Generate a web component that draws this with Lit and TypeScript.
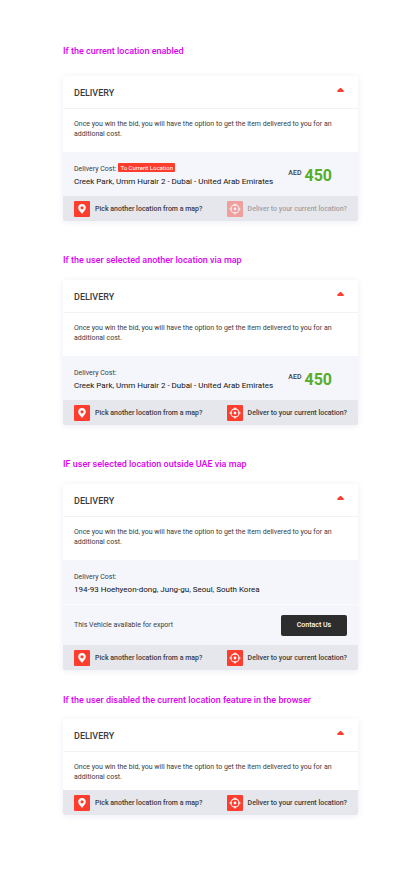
import { LitElement, html, css, svg, nothing } from "lit";
import { customElement, property, state } from "lit/decorators.js";
import { classMap } from "lit/directives/class-map.js";

const pinIcon = svg`
  <path fill="#fff" fill-rule="evenodd" d="M8 3C5.7 3 4.2 4.6 4.2 6.7c0 2.5 2.6 4.4 3.8 6.3 1.2-1.9 3.8-3.8 3.8-6.3C11.8 4.6 10.3 3 8 3ZM8 5.2a1.6 1.6 0 1 1 0 3.2 1.6 1.6 0 0 1 0-3.2Z"/>`;

const targetIcon = svg`
  <circle cx="8" cy="8" r="4.1" fill="none" stroke="#fff" stroke-width="1.1"/>
  <circle cx="8" cy="8" r="1.4" fill="#fff"/>
  <path d="M8 2.4v2.6M8 11v2.6M2.4 8H5M11 8h2.6" stroke="#fff" stroke-width="1.2"/>`;

@customElement("delivery-card")
export class DeliveryCard extends LitElement {
  @property() address = "";
  @property() price = "";
  @property({ type: Boolean }) current = false;
  @property({ type: Boolean }) exportable = false;
  @state() private open = true;

  static styles = css`
    :host {
      display: block;
      border-radius: 2px;
      background: #fff;
      box-shadow: 0 1px 6px rgba(60, 70, 160, 0.09);
      overflow: hidden;
      color: #3a3a3c;
      font-size: 7px;
      line-height: 10px;
    }
    button {
      border: 0;
      padding: 0;
      background: none;
      color: inherit;
      font: inherit;
      text-align: left;
      cursor: pointer;
    }
    button:disabled {
      cursor: default;
    }
    .head {
      display: flex;
      align-items: flex-start;
      justify-content: space-between;
      width: 100%;
      height: 33px;
      padding: 12px 14px 0 11px;
      border-bottom: 1px solid #f3f3f7;
      font-size: 9px;
      font-weight: 500;
    }
    .caret {
      width: 7px;
      height: 4px;
    }
    .closed .caret {
      transform: rotate(180deg);
    }
    p {
      margin: 0;
    }
    .intro {
      padding: 10px 24px 8px 11px;
    }
    .roomy {
      padding-bottom: 13px;
    }
    .cost {
      display: flex;
      align-items: flex-start;
      justify-content: space-between;
      height: 44px;
      padding: 11px 26px 0 11px;
      box-sizing: border-box;
      background: #f5f6fb;
    }
    .label {
      display: flex;
      align-items: center;
      gap: 2px;
      height: 12px;
    }
    .tag {
      align-self: flex-start;
      padding: 0 2px;
      border-radius: 1px;
      background: #ff3d2e;
      color: #fff;
      font-size: 6px;
      line-height: 9px;
    }
    .address {
      margin-top: 2px;
      color: #111;
      font-size: 8px;
      white-space: nowrap;
    }
    .price {
      display: flex;
      align-items: flex-start;
      gap: 3px;
      padding-top: 5px;
      font-weight: 500;
    }
    .amount {
      color: #56ad2a;
      font-size: 16px;
      font-weight: 700;
      line-height: 16px;
    }
    .export {
      display: flex;
      align-items: center;
      justify-content: space-between;
      height: 41px;
      padding: 0 11px;
      border-top: 1px solid #fbfbfd;
      box-sizing: border-box;
      background: #f5f6fb;
    }
    .contact {
      width: 66px;
      height: 21px;
      border-radius: 2px;
      background: #2d2d2d;
      color: #fff;
      font-weight: 500;
      text-align: center;
    }
    .actions {
      display: grid;
      grid-template-columns: 153fr 120fr;
      align-items: center;
      height: 25px;
      padding: 0 11px;
      background: #e6e7ed;
    }
    .action {
      display: flex;
      align-items: center;
      gap: 5px;
      font-weight: 500;
      white-space: nowrap;
    }
    .action svg {
      width: 16px;
      height: 16px;
      border-radius: 1px;
      background: #ff3d2e;
    }
    .action:disabled {
      opacity: 0.42;
    }
  `;

  render() {
    return html`
      <button
        class=${classMap({ head: true, closed: !this.open })}
        aria-expanded=${this.open}
        @click=${() => (this.open = !this.open)}
      >
        <span>DELIVERY</span>
        <svg class="caret" viewBox="0 0 7 4" aria-hidden="true">
          <path d="M3 0h1l2.8 2.8Q7 4 6 4H1Q0 4 .2 2.8Z" fill="#ff3d2e" />
        </svg>
      </button>
      ${this.open ? this.body() : nothing}
    `;
  }

  private body() {
    return html`
      <p class=${classMap({ intro: true, roomy: this.address !== "" })}>
        Once you win the bid, you will have the option to get the item delivered to you for an
        additional cost.
      </p>
      ${this.address
        ? html`<div class="cost">
            <div>
              <div class="label">
                <span>Delivery Cost:</span>
                ${this.current ? html`<span class="tag">To Current Location</span>` : nothing}
              </div>
              <p class="address">${this.address}</p>
            </div>
            ${this.price
              ? html`<div class="price">
                  <span>AED</span><span class="amount">${this.price}</span>
                </div>`
              : nothing}
          </div>`
        : nothing}
      ${this.exportable
        ? html`<div class="export">
            <span>This Vehicle available for export</span>
            <button class="contact">Contact Us</button>
          </div>`
        : nothing}
      <div class="actions">
        <button class="action">
          <svg viewBox="0 0 16 16" aria-hidden="true">${pinIcon}</svg>
          <span>Pick another location from a map?</span>
        </button>
        <button class="action" ?disabled=${this.current}>
          <svg viewBox="0 0 16 16" aria-hidden="true">${targetIcon}</svg>
          <span>Deliver to your current location?</span>
        </button>
      </div>
    `;
  }
}

@customElement("app-root")
export class AppRoot extends LitElement {
  static styles = css`
    :host {
      display: block;
      box-sizing: border-box;
      min-height: 100vh;
      padding: 45px 62px 59px 63px;
      background: #fff;
      font-family: Roboto, "Liberation Sans", sans-serif;
    }
    section + section {
      margin-top: 33px;
    }
    section.last {
      margin-top: 24px;
    }
    h2 {
      margin: 0 0 14px;
      color: #dc00f0;
      font-size: 9px;
      font-weight: 500;
      line-height: 12px;
    }
    .first h2 {
      margin-bottom: 19px;
    }
    .last h2 {
      margin-bottom: 13px;
    }
  `;

  render() {
    const park = "Creek Park, Umm Hurair 2 - Dubai - United Arab Emirates";
    return html`
      <section class="first">
        <h2>If the current location enabled</h2>
        <delivery-card address=${park} price="450" current></delivery-card>
      </section>
      <section>
        <h2>If the user selected another location via map</h2>
        <delivery-card address=${park} price="450"></delivery-card>
      </section>
      <section>
        <h2>IF user selected location outside UAE via map</h2>
        <delivery-card
          address="194-93 Hoehyeon-dong, Jung-gu, Seoul, South Korea"
          exportable
        ></delivery-card>
      </section>
      <section class="last">
        <h2>If the user disabled the current location feature in the browser</h2>
        <delivery-card></delivery-card>
      </section>
    `;
  }
}
